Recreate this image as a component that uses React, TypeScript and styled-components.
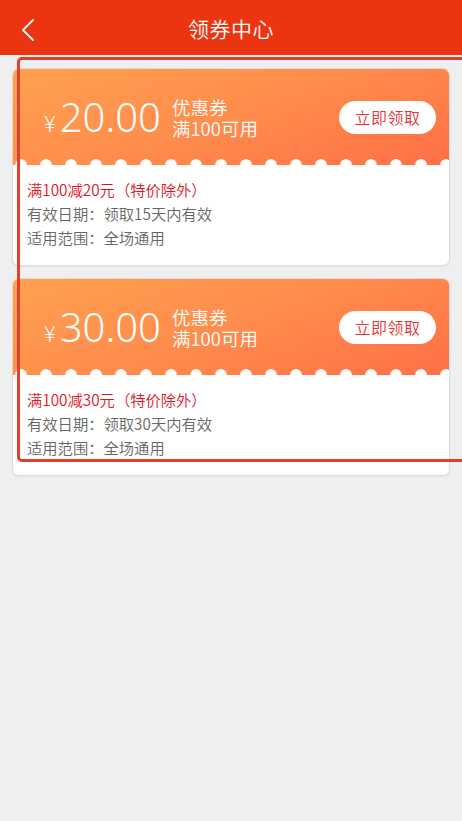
import React from "react";
import styled, { createGlobalStyle } from "styled-components";

const GlobalStyle = createGlobalStyle`
  html, body { margin: 0; padding: 0; background: #efefef; }
  body { font-family: "Noto Sans CJK SC", "Noto Sans", sans-serif; }
  * { box-sizing: border-box; }
`;

const Page = styled.div`
  position: relative;
  width: 462px;
  min-height: 821px;
  background: #efefef;
  overflow: hidden;
`;

const Header = styled.header`
  height: 55px;
  background: #eb3410;
  display: flex;
  align-items: center;
  justify-content: center;
  position: relative;
`;

const BackButton = styled.button`
  position: absolute;
  left: 14px;
  top: 14px;
  width: 28px;
  height: 32px;
  border: none;
  background: transparent;
  padding: 0;
  display: flex;
  align-items: center;
  justify-content: center;
`;

const Title = styled.h1`
  margin: 0;
  color: #fff;
  font-size: 21px;
  font-weight: 350;
  letter-spacing: 0.5px;
  font-family: "Noto Sans CJK SC", sans-serif;
`;

const List = styled.div`
  display: flex;
  flex-direction: column;
  gap: 12px;
  padding: 13px 12px 12px 12px;
`;

const Card = styled.div`
  border: 1px solid #dcdcdc;
  border-radius: 7px;
  overflow: hidden;
  background: #fff;
  box-shadow: 0 1px 2px rgba(0, 0, 0, 0.05);
`;

const Top = styled.div`
  height: 96px;
  display: flex;
  align-items: center;
  padding: 0 13px 0 31px;
  background:
    radial-gradient(circle at 12.5px 100%, #fff 5.5px, rgba(255,255,255,0) 6.2px) -4.5px 100% / 25px 12px repeat-x,
    linear-gradient(160deg, #ffa14f 0%, #ff8c4c 50%, #ff6f47 100%);
  color: #fff;
`;

const Amount = styled.div`
  display: flex;
  align-items: baseline;
  font-family: "Noto Sans", "Noto Sans CJK SC", sans-serif;
`;

const Yen = styled.span`
  font-size: 22px;
  font-weight: 300;
  margin-right: 4px;
  font-family: "Noto Sans CJK SC", sans-serif;
`;

const Value = styled.span`
  font-size: 40px;
  line-height: 1;
  font-weight: 300;
`;

const Desc = styled.div`
  margin-left: 11px;
  display: flex;
  flex-direction: column;
  font-size: 18.5px;
  font-weight: 350;
  line-height: 21px;
  margin-top: 2px;
`;

const Spacer = styled.div`
  flex: 1;
`;

const ClaimButton = styled.button`
  width: 97px;
  height: 33px;
  border: none;
  border-radius: 17px;
  background: #fff;
  color: #e3353a;
  font-size: 16px;
  font-weight: 350;
  font-family: "Noto Sans CJK SC", sans-serif;
  padding: 0;
  letter-spacing: 0.5px;
`;

const Body = styled.div`
  padding: 12px 14px 16px 14px;
  display: flex;
  flex-direction: column;
`;

const Line = styled.div<{ $accent?: boolean }>`
  font-size: 15.3px;
  font-weight: 350;
  line-height: 24px;
  color: ${(p) => (p.$accent ? "#e0161e" : "#666")};
`;

const Annotation = styled.div`
  position: absolute;
  left: 17px;
  top: 57px;
  width: 470px;
  height: 405px;
  border: 3px solid #e2402b;
  border-radius: 5px;
  pointer-events: none;
`;

const coupons = [
  { value: "20.00", rule: "满100减20元（特价除外）", days: 15 },
  { value: "30.00", rule: "满100减30元（特价除外）", days: 30 },
];

export default function App() {
  return (
    <Page>
      <GlobalStyle />
      <Header>
        <BackButton aria-label="返回">
          <svg width="14" height="24" viewBox="0 0 14 24">
            <polyline points="12,2 2,12 12,22" fill="none" stroke="#fff" strokeWidth="1.8" strokeLinecap="round" strokeLinejoin="round" />
          </svg>
        </BackButton>
        <Title>领券中心</Title>
      </Header>
      <List>
        {coupons.map((c) => (
          <Card key={c.value}>
            <Top>
              <Amount>
                <Yen>¥</Yen>
                <Value>{c.value}</Value>
              </Amount>
              <Desc>
                <span>优惠券</span>
                <span>满100可用</span>
              </Desc>
              <Spacer />
              <ClaimButton>立即领取</ClaimButton>
            </Top>
            <Body>
              <Line $accent>{c.rule}</Line>
              <Line>有效日期：领取{c.days}天内有效</Line>
              <Line>适用范围：全场通用</Line>
            </Body>
          </Card>
        ))}
      </List>
      <Annotation />
    </Page>
  );
}
